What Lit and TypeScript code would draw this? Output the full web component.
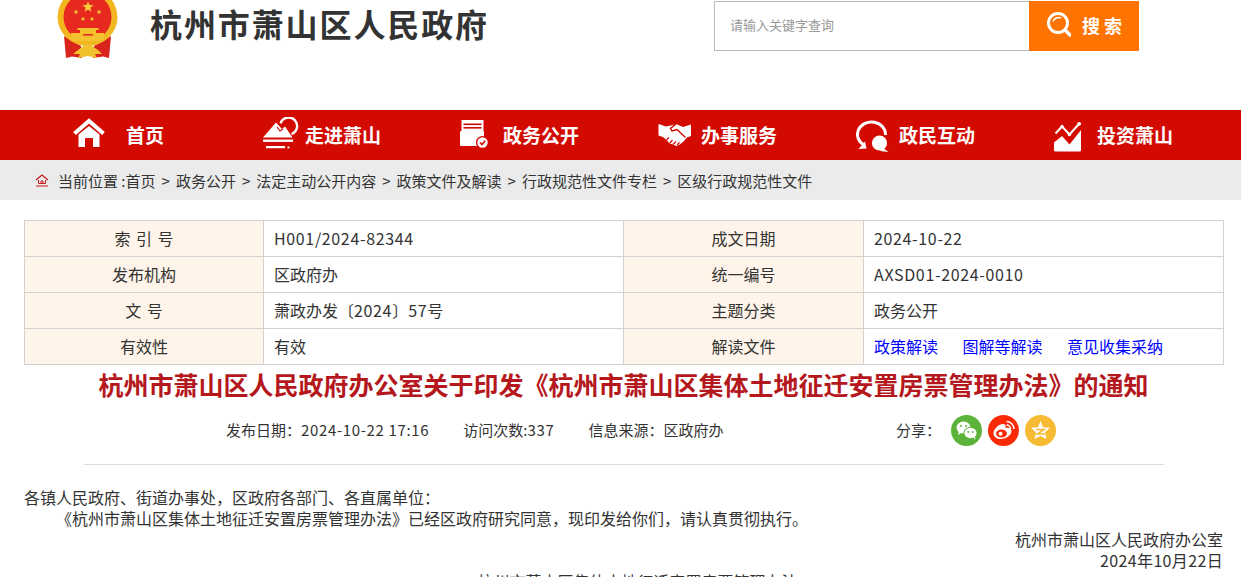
import { LitElement, html, css, svg } from 'lit';
import { customElement } from 'lit/decorators.js';

const NAV_ICONS = [
  // home
  svg`<path d="M10.5 16.5 L25 4 L39.5 16.5" fill="none" stroke="#fff" stroke-width="4"/>
    <path d="M14.5 17.5 L25 9 L35.5 17.5 V30 H29 V21 H21 V30 H14.5 Z" fill="#fff"/>`,
  // mountain and sun
  svg`<path d="M1 20.5 L14 5.5 L20 12 L23 9.5 L30.5 20.5 Z" fill="#fff"/>
    <path d="M18.5 6.5 A8.5 8.5 0 1 1 29.5 17" fill="none" stroke="#fff" stroke-width="2.4"/>
    <path d="M15 10 L18 14 L21 12" fill="none" stroke="#d20a00" stroke-width="1.2"/>
    <rect x="1" y="22.5" width="30" height="2.4" fill="#fff"/>
    <rect x="4" y="29" width="19" height="2.2" fill="#fff"/>
    <rect x="25.5" y="29.5" width="2" height="1.8" fill="#fff"/>`,
  // document with check
  svg`<rect x="1.5" y="3" width="22" height="13" fill="#fff"/>
    <rect x="3.5" y="6.5" width="18" height="1.6" fill="#d20a00"/>
    <rect x="3.5" y="10" width="18" height="1.6" fill="#d20a00"/>
    <rect x="0" y="14" width="24" height="15" rx="1" fill="#fff"/>
    <circle cx="22.5" cy="25.5" r="6.6" fill="#d20a00"/>
    <circle cx="22.5" cy="25.5" r="5.2" fill="#fff"/>
    <path d="M20 25.5 L22 27.6 L25.2 23.8" fill="none" stroke="#d20a00" stroke-width="1.6"/>`,
  // handshake
  svg`<path d="M0.5 7 L8 9.5 L15 8 L18 7 L25 10 L33 7.5 V19 L29 20.5 L25 25 L21 28 L18 29 L15 27.5 L11.5 26.5 L8.5 23 L5 20 L0.5 18.5 Z" fill="#fff"/>
    <path d="M18 7 L12.5 11.5 L14 14 L19 12.5 L27.5 20.5" fill="none" stroke="#d20a00" stroke-width="1.4"/>
    <path d="M8.5 23 L11 20.5 M11.5 26.5 L14.5 23 M15 27.5 L18 24.5 M19 28 L21.5 25.5" stroke="#d20a00" stroke-width="1.2"/>`,
  // chat bubbles
  svg`<path d="M8 28 A14 12.5 0 1 1 29.5 18" fill="none" stroke="#fff" stroke-width="3"/>
    <path d="M9 24.5 L10.5 31.5 L2.5 32 Z" fill="#fff"/>
    <circle cx="23.5" cy="26" r="9.5" fill="#d20a00"/>
    <circle cx="23.5" cy="26" r="7.6" fill="#fff"/>
    <path d="M27 31 L32.5 35 L24 34 Z" fill="#fff"/>`,
  // chart
  svg`<path d="M0 33 V25.5 L8 19 L15.5 27.5 L27 13 V33 A1.5 1.5 0 0 1 25.5 34.5 H1.5 A1.5 1.5 0 0 1 0 33 Z" fill="#fff"/>
    <path d="M1.5 16.5 L8 9.5 L15.5 17.5 L25 7" fill="none" stroke="#fff" stroke-width="2"/>
    <circle cx="8" cy="9.5" r="1.7" fill="#fff"/><circle cx="15.5" cy="17.5" r="1.7" fill="#fff"/><circle cx="25.2" cy="6.8" r="1.9" fill="#fff"/>`,
];

const NAV = ['首页', '走进萧山', '政务公开', '办事服务', '政民互动', '投资萧山'];
const CRUMBS = ['首页', '政务公开', '法定主动公开内容', '政策文件及解读', '行政规范性文件专栏', '区级行政规范性文件'];

const star = (x: number, y: number, r: number, fill = '#f7d13c') => {
  const pts: string[] = [];
  for (let i = 0; i < 10; i++) {
    const a = -Math.PI / 2 + (i * Math.PI) / 5;
    const d = i % 2 ? r * 0.4 : r;
    pts.push(`${(x + d * Math.cos(a)).toFixed(2)},${(y + d * Math.sin(a)).toFixed(2)}`);
  }
  return svg`<polygon points=${pts.join(' ')} fill=${fill}/>`;
};

@customElement('app-root')
export class AppRoot extends LitElement {
  static styles = css`
    :host {
      display: block;
      height: 577px;
      overflow: hidden;
      font-family: "Noto Sans CJK SC", "Liberation Sans", sans-serif;
      color: #333;
      background: #fff;
    }
    .header {
      height: 110px;
      display: flex;
      align-items: flex-start;
      padding-left: 57px;
    }
    .emblem { width: 62px; height: 60px; display: block; }
    .site-name {
      margin: 0 0 0 31px;
      font-size: 32px;
      line-height: 46px;
      letter-spacing: 1.9px;
      font-weight: 700;
      white-space: nowrap;
      color: #333;
    }
    .search {
      margin: 1px 102px 0 auto;
      display: flex;
      height: 50px;
    }
    .search input {
      width: 315px;
      height: 50px;
      box-sizing: border-box;
      border: 1px solid #bbb;
      border-right: 0;
      outline: 0;
      padding: 0 15px 3px;
      font: 13px "Noto Sans CJK SC", sans-serif;
    }
    .search input::placeholder { color: #999; }
    .search-btn {
      width: 110px;
      height: 50px;
      background: #ff7300;
      color: #fff;
      display: flex;
      align-items: center;
      padding: 0 0 3px 17px;
      box-sizing: border-box;
      font-size: 18px;
      font-weight: 700;
      letter-spacing: 4px;
      gap: 11px;
    }
    .nav {
      height: 50px;
      background: #d20a00;
      display: flex;
      align-items: center;
      padding-left: 64px;
    }
    .nav-item {
      width: 198px;
      flex: none;
      display: flex;
      align-items: center;
      color: #fff;
      font-size: 19px;
      font-weight: 700;
    }
    .nav-item svg { width: 43px; height: 36px; flex: none; }
    .nav-item span { width: 76px; text-align: center; white-space: nowrap; padding-bottom: 2px; }
    .crumbs {
      height: 40px;
      background: #ebebeb;
      display: flex;
      align-items: center;
      padding-left: 35px;
      font-size: 15px;
    }
    .crumbs svg { width: 14px; height: 14px; margin-right: 9px; flex: none; }
    .trail { white-space: nowrap; }
    .trail i { font-style: normal; margin: 0 6px; }
    .main { padding: 20px 18px 0 24px; }
    table {
      width: 1199px;
      border-collapse: collapse;
      table-layout: fixed;
      font-size: 16px;
    }
    td {
      height: 36px;
      padding: 0 10px 1px;
      border: 1px solid #d2d2d2;
      box-sizing: border-box;
      white-space: nowrap;
    }
    td.label { background: #fef4e9; text-align: center; word-spacing: 2px; }
    td a { color: #0000ff; text-decoration: none; margin-right: 24.5px; }
    .num { letter-spacing: 0.65px; }
    h1 {
      margin: 0;
      height: 44px;
      line-height: 38px;
      text-align: center;
      font-size: 25px;
      font-weight: 700;
      color: #b5181c;
      white-space: nowrap;
    }
    .meta {
      display: flex;
      align-items: center;
      height: 31px;
      margin-top: 6px;
      padding-left: 202px;
      font-size: 15px;
      gap: 34px;
      white-space: nowrap;
    }
    .meta-text { padding-bottom: 2px; }
    .share { display: flex; align-items: center; gap: 6px; margin-left: auto; margin-right: 167px; }
    .share span { margin-right: 4px; padding-bottom: 2px; }
    .share svg { width: 31px; height: 31px; display: block; }
    hr {
      margin: 18px 59px 0 60px;
      border: 0;
      border-top: 1px solid #ddd;
    }
    .body { margin-top: 22px; font-size: 16px; line-height: 21px; }
    .body p { margin: 0; }
    .indent { text-indent: 32px; }
    .right { text-align: right; }
    .center { text-align: center; text-indent: 28px; }
    .date { letter-spacing: 0.35px; }
  `;

  render() {
    return html`
      <div class="header">
        <svg class="emblem" viewBox="0 0 62 60">
          <path d="M7 36 L24 46 L25 58 L15 56.5 L9 58 Z" fill="#d9241c"/>
          <path d="M54 36 L37 46 L36 58 L46 56.5 L52 58 Z" fill="#d9241c"/>
          <ellipse cx="30.5" cy="17" rx="30" ry="29" fill="#f2b71f"/>
          <circle cx="30.5" cy="17" r="24" fill="#e8291f"/>
          ${star(31, 7, 6)}${star(19, 12, 2.7)}${star(42, 12, 2.7)}${star(26, 19, 2.5)}${star(35, 19, 2.5)}
          <path d="M21 28 H41 L42 30 H39 V33 H47 V41 H14 V33 H23 V30 H20 Z" fill="#f3c12e"/>
          <rect x="26" y="34" width="10" height="1.6" fill="#e8291f"/>
          <path d="M21 50 L30.5 43 L41 50 L45 54 L38 54 L40 58 L30.5 56 L21 58 L23 54 L16 54 Z" fill="#f2c12e"/>
        </svg>
        <h2 class="site-name">杭州市萧山区人民政府</h2>
        <div class="search">
          <input placeholder="请输入关键字查询" />
          <div class="search-btn">
            <svg width="25" height="28" viewBox="0 0 25 28">
              <circle cx="12" cy="12" r="9.5" fill="none" stroke="#fff" stroke-width="3"/>
              <path d="M7 10.5 A6 6 0 0 1 15 7" fill="none" stroke="#fff" stroke-width="1.5"/>
              <path d="M19 19 L24 24" stroke="#fff" stroke-width="3.4" stroke-linecap="round"/>
            </svg>
            搜索
          </div>
        </div>
      </div>
      <nav class="nav">
        ${NAV.map((label, i) => html`
          <div class="nav-item">
            <svg viewBox="0 0 43 36">${NAV_ICONS[i]}</svg>
            <span>${label}</span>
          </div>
        `)}
      </nav>
      <div class="crumbs">
        <svg viewBox="0 0 14 14">
          <path d="M1 7 L7 2 L13 7" fill="none" stroke="#c8161d" stroke-width="1.2"/>
          <path d="M3.5 7 V10.5 H10.5 V7 M6 10.5 V8 H8 V10.5 M1 13 H13" fill="none" stroke="#c8161d" stroke-width="1"/>
        </svg>
        <span class="trail">当前位置 :${CRUMBS.map((c, i) => html`${i ? html`<i>&gt;</i>` : ''}${c}`)}</span>
      </div>
      <div class="main">
        <table>
          <colgroup><col style="width:239px"><col style="width:360px"><col style="width:240px"><col style="width:360px"></colgroup>
          <tr><td class="label">索 引 号</td><td class="num">H001/2024-82344</td><td class="label">成文日期</td><td class="num">2024-10-22</td></tr>
          <tr><td class="label">发布机构</td><td>区政府办</td><td class="label">统一编号</td><td class="num">AXSD01-2024-0010</td></tr>
          <tr><td class="label">文 号</td><td>萧政办发〔<span class="num">2024</span>〕<span class="num">57</span>号</td><td class="label">主题分类</td><td>政务公开</td></tr>
          <tr><td class="label">有效性</td><td>有效</td><td class="label">解读文件</td><td><a>政策解读</a><a>图解等解读</a><a>意见收集采纳</a></td></tr>
        </table>
        <h1>杭州市萧山区人民政府办公室关于印发《杭州市萧山区集体土地征迁安置房票管理办法》的通知</h1>
        <div class="meta">
          <div class="meta-text">发布日期：<span class="num">2024-10-22 17:16</span></div>
          <div class="meta-text">访问次数:<span class="num">337</span></div>
          <div class="meta-text">信息来源：区政府办</div>
          <div class="share">
            <span>分享：</span>
            <svg viewBox="0 0 31 31">
              <circle cx="15.5" cy="15.5" r="15.5" fill="#5bb33a"/>
              <ellipse cx="12.5" cy="12.5" rx="7" ry="6" fill="#fff"/>
              <path d="M8 16 L7 20 L11 17.5 Z" fill="#fff"/>
              <ellipse cx="19.5" cy="18" rx="6.6" ry="5.6" fill="#fff" stroke="#5bb33a"/>
              <path d="M22 22 L24.5 25 L23.8 21 Z" fill="#fff"/>
              <circle cx="10" cy="11" r="1" fill="#5bb33a"/><circle cx="15" cy="11" r="1" fill="#5bb33a"/>
              <circle cx="17.3" cy="17" r="0.9" fill="#5bb33a"/><circle cx="21.7" cy="17" r="0.9" fill="#5bb33a"/>
            </svg>
            <svg viewBox="0 0 31 31">
              <circle cx="15.5" cy="15.5" r="15.5" fill="#fb2a06"/>
              <path d="M5.5 18.5 C5.5 14 11 9 15 9 C17.5 9 18 11 17.5 13 C21 12 23.5 13 23.5 16 C23.5 20 18 24 13 24 C9 24 5.5 22 5.5 18.5 Z" fill="#fff"/>
              <ellipse cx="13.5" cy="18.5" rx="5.5" ry="4" fill="#fb2a06"/>
              <circle cx="12.5" cy="18.8" r="2" fill="#fff"/>
              <path d="M18.5 6.5 A7.5 7.5 0 0 1 26 14 M18.5 10 A4 4 0 0 1 22.5 14" fill="none" stroke="#fff" stroke-width="1.5"/>
            </svg>
            <svg viewBox="0 0 31 31">
              <circle cx="15.5" cy="15.5" r="15.5" fill="#f7bb33"/>
              <path d="M15.5 6 L18 12.2 L25 12.7 L20 17.3 L21.5 24 L15.5 21 L9.5 24 L11 17.3 L6 12.7 L13 12.2 Z" fill="#fff"/>
              <path d="M11 14.5 H19 L12.5 19 H20" fill="none" stroke="#f7bb33" stroke-width="1.6"/>
            </svg>
          </div>
        </div>
        <hr />
        <div class="body">
          <p>各镇人民政府、街道办事处，区政府各部门、各直属单位：</p>
          <p class="indent">《杭州市萧山区集体土地征迁安置房票管理办法》已经区政府研究同意，现印发给你们，请认真贯彻执行。</p>
          <p class="right">杭州市萧山区人民政府办公室</p>
          <p class="right date">2024年10月22日</p>
          <p class="center">杭州市萧山区集体土地征迁安置房票管理办法</p>
        </div>
      </div>
    `;
  }
}
